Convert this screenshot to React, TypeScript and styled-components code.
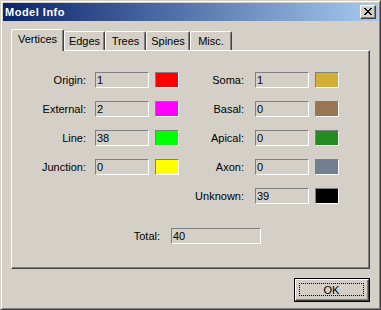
import React from "react";
import styled, { createGlobalStyle } from "styled-components";

const Global = createGlobalStyle`
  html, body { margin: 0; padding: 0; background: #d4d0c8; }
  body { font-family: "Liberation Sans", Arial, sans-serif; font-size: 11px; color: #000; }
  * { box-sizing: border-box; }
`;

const Window = styled.div`
  width: 381px;
  height: 310px;
  display: flex;
  flex-direction: column;
  background: #d4d0c8;
  border: 1px solid;
  border-color: #d4d0c8 #404040 #404040 #d4d0c8;
  box-shadow: inset 1px 1px 0 #ffffff, inset -1px -1px 0 #808080;
  padding: 2px;
`;

const TitleBar = styled.div`
  height: 18px;
  flex: none;
  display: flex;
  align-items: center;
  justify-content: space-between;
  padding: 0 2px 0 2px;
  background: linear-gradient(to right, #0a246a, #a6caf0);
`;

const Title = styled.span`
  color: #fff;
  font-weight: bold;
  font-size: 11px;
  letter-spacing: 0.5px;
`;

const CloseButton = styled.div`
  width: 16px;
  height: 14px;
  background: #d4d0c8;
  border: 1px solid;
  border-color: #ffffff #404040 #404040 #ffffff;
  box-shadow: inset -1px -1px 0 #808080;
  display: flex;
  align-items: center;
  justify-content: center;
  padding-bottom: 1px;
`;

const Body = styled.div`
  flex: 1;
  display: flex;
  flex-direction: column;
  padding: 8px 8px 0 8px;
`;

const TabStrip = styled.div`
  display: flex;
  align-items: flex-end;
  position: relative;
  z-index: 1;
`;

const Tab = styled.div<{ $active?: boolean; $w: number }>`
  width: ${(p) => p.$w}px;
  height: ${(p) => (p.$active ? 22 : 19)}px;
  margin-bottom: ${(p) => (p.$active ? -1 : 0)}px;
  background: #d4d0c8;
  border-top: 1px solid #fff;
  border-left: 1px solid #fff;
  border-right: 1px solid #404040;
  border-top-left-radius: 2px;
  border-top-right-radius: 2px;
  box-shadow: inset -1px 0 0 #808080;
  display: flex;
  align-items: ${(p) => (p.$active ? "flex-start" : "center")};
  padding-top: ${(p) => (p.$active ? 3 : 0)}px;
  justify-content: center;
  font-size: 11px;
`;

const Panel = styled.div`
  height: 219px;
  border: 1px solid;
  border-color: #fff #404040 #404040 #fff;
  box-shadow: inset -1px -1px 0 #808080;
  padding: 21px 0 0 8px;
  display: flex;
  flex-direction: column;
`;

const Grid = styled.div`
  display: grid;
  grid-template-columns: 69px 54px 24px 64px 54px 24px;
  grid-auto-rows: 16px;
  column-gap: 6px;
  row-gap: 13px;
  align-items: center;
`;

const Label = styled.div<{ $pad: number; $col?: number }>`
  text-align: right;
  padding-right: ${(p) => p.$pad}px;
  white-space: nowrap;
  ${(p) => (p.$col ? `grid-column: ${p.$col};` : "")}
`;

const Field = styled.div<{ $w?: number; $col?: number }>`
  height: 16px;
  ${(p) => (p.$w ? `width: ${p.$w}px;` : "")}
  ${(p) => (p.$col ? `grid-column: ${p.$col};` : "")}
  border: 1px solid;
  border-color: #808080 #fff #fff #808080;
  background: #d4d0c8;
  padding-left: 1px;
  display: flex;
  align-items: center;
  line-height: 14px;
`;

const Swatch = styled.div<{ $c: string }>`
  height: 16px;
  border: 1px solid;
  border-color: #808080 #fff #fff #808080;
  background: ${(p) => p.$c};
`;

const TotalRow = styled.div`
  display: grid;
  grid-template-columns: 40px 90px;
  column-gap: 11px;
  align-items: center;
  margin-top: 24px;
  padding-left: 100px;
`;

const Footer = styled.div`
  display: flex;
  justify-content: flex-end;
  padding-top: 9px;
`;

const OkButton = styled.div`
  width: 76px;
  height: 24px;
  border: 1px solid #000;
  display: flex;
  padding: 0;
`;

const OkInner = styled.div`
  flex: 1;
  border: 1px solid;
  border-color: #fff #404040 #404040 #fff;
  box-shadow: inset -1px -1px 0 #808080;
  padding: 2px;
  display: flex;
`;

const Focus = styled.div`
  flex: 1;
  margin: 1px 2px 2px 1px;
  border: 1px dotted #000;
  display: flex;
  align-items: center;
  justify-content: center;
  font-size: 11px;
`;

const left = [
  { l: "Origin:", v: "1", c: "#ff0000" },
  { l: "External:", v: "2", c: "#ff00ff" },
  { l: "Line:", v: "38", c: "#00ff00" },
  { l: "Junction:", v: "0", c: "#ffff00" },
];
const right = [
  { l: "Soma:", v: "1", c: "#d4af37" },
  { l: "Basal:", v: "0", c: "#987654" },
  { l: "Apical:", v: "0", c: "#228b22" },
  { l: "Axon:", v: "0", c: "#708090" },
  { l: "Unknown:", v: "39", c: "#000000" },
];

const tabs = [
  { t: "Vertices", w: 53 },
  { t: "Edges", w: 41 },
  { t: "Trees", w: 41 },
  { t: "Spines", w: 44 },
  { t: "Misc.", w: 42 },
];

export default function App() {
  const rows = [];
  for (let i = 0; i < 5; i++) {
    const L = left[i];
    const R = right[i];
    if (L) {
      rows.push(<Label key={"ll" + i} $pad={3} $col={1}>{L.l}</Label>);
      rows.push(<Field key={"lf" + i} $col={2}>{L.v}</Field>);
      rows.push(<Swatch key={"ls" + i} $c={L.c} />);
    }
    rows.push(<Label key={"rl" + i} $pad={5} $col={4}>{R.l}</Label>);
    rows.push(<Field key={"rf" + i} $col={5}>{R.v}</Field>);
    rows.push(<Swatch key={"rs" + i} $c={R.c} />);
  }
  return (
    <>
      <Global />
      <Window>
        <TitleBar>
          <Title>Model Info</Title>
          <CloseButton>
            <svg width="8" height="7" viewBox="0 0 8 7" shapeRendering="crispEdges">
              <path
                d="M0 0h2v1h-2zM6 0h2v1h-2zM1 1h2v1h-2zM5 1h2v1h-2zM2 2h4v1h-4zM3 3h2v1h-2zM2 4h4v1h-4zM1 5h2v1h-2zM5 5h2v1h-2zM0 6h2v1h-2zM6 6h2v1h-2z"
                fill="#000"
              />
            </svg>
          </CloseButton>
        </TitleBar>
        <Body>
          <TabStrip>
            {tabs.map((t, i) => (
              <Tab key={t.t} $w={t.w} $active={i === 0}>
                {t.t}
              </Tab>
            ))}
          </TabStrip>
          <Panel>
            <Grid>{rows}</Grid>
            <TotalRow>
              <Label $pad={0}>Total:</Label>
              <Field>40</Field>
            </TotalRow>
          </Panel>
          <Footer>
            <OkButton>
              <OkInner>
                <Focus>OK</Focus>
              </OkInner>
            </OkButton>
          </Footer>
        </Body>
      </Window>
    </>
  );
}
